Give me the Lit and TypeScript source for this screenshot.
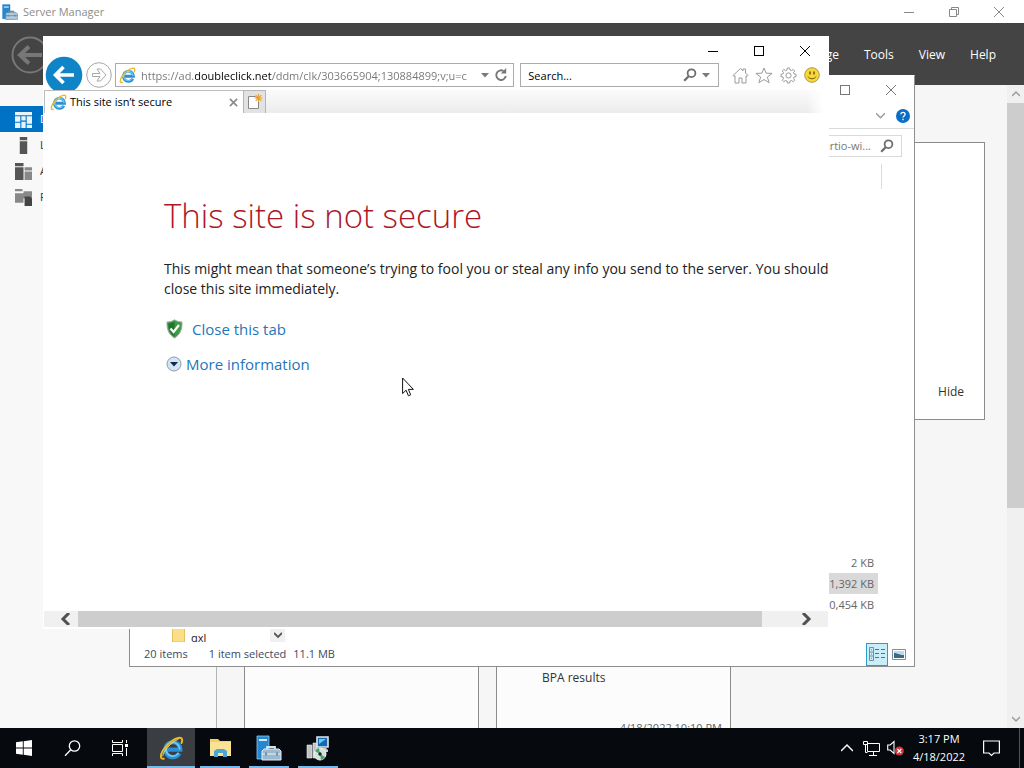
import { LitElement, html, svg, css } from "lit";
import { customElement } from "lit/decorators.js";
import { classMap } from "lit/directives/class-map.js";

const shared = css`
  * {
    box-sizing: border-box;
  }
  button,
  input {
    font: inherit;
    color: inherit;
    margin: 0;
    padding: 0;
    border: 0;
    background: none;
    outline: none;
  }
  button {
    display: flex;
    align-items: center;
    justify-content: center;
    flex: none;
    white-space: nowrap;
  }
  svg {
    display: block;
    flex: none;
  }
`;

/* ---------- icons ---------- */

const ieLogo = (size: number) => html`<svg width=${size} height=${size} viewBox="0 0 24 24" fill="none" aria-hidden="true">
  <path d="M19.600 16.600a7.200 7.200 0 1 1 .9-3.500H8" stroke="#2a8fd6" stroke-width="4" />
  <path d="M18.800 16.200a6.600 6.600 0 1 1 1-3.100" stroke="#6ccbf4" stroke-width="1.700" />
  <path d="M4.600 21.800C1.200 22.600.8 19 3.600 14.200 7 8.400 14.500 2.200 19.600 1.700c3-.2 3.200 2.300 2 5" stroke="#e9b927" stroke-width="1.900" stroke-linecap="round" />
  <path d="M3.600 19.500c.2-2.500 2-5.600 4.600-8.500 3.300-3.700 7.400-6.900 10.600-8" stroke="#fbe27a" stroke-width=".8" />
</svg>`;

const minimize = svg`<path d="M0 5.500h10" />`;
const maximize = svg`<rect x=".5" y=".5" width="9" height="9" />`;
const restore = svg`<path d="M2.500 2.500v-2h7v7h-2M.5 2.500h7v7h-7z" />`;
const cross = svg`<path d="M0 0l10 10M10 0L0 10" />`;
const caption = (shape: unknown, size = 10) =>
  html`<svg width=${size} height=${size} viewBox="0 0 10 10" fill="none" stroke="currentColor" overflow="visible" aria-hidden="true">${shape}</svg>`;

const chevron = (path: string, w = 8, h = 8, sw = 1.5) =>
  html`<svg width=${w} height=${h} viewBox="0 0 8 8" fill="none" stroke="currentColor" stroke-width=${sw} aria-hidden="true"><path d=${path} /></svg>`;
const UP = "M0 6l4-4 4 4";
const DOWN = "M0 2l4 4 4-4";

const lens = html`<svg width="14" height="14" viewBox="0 0 14 14" fill="none" stroke="#6e6e6e" aria-hidden="true">
  <circle cx="8.500" cy="5.200" r="3.900" stroke-width="1.800" />
  <path d="M5.700 8.200L1.200 12.800" stroke-width="2.300" />
</svg>`;

const serverLogo = (size: number, muted: boolean) => html`<svg width=${size} height=${size} viewBox="0 0 26 26" aria-hidden="true">
  <path d="M1 1h12v23H1z" fill="#2487cf" stroke=${muted ? "#2487cf" : "#8ecbf2"} stroke-width=".8" />
  <path d="M3 5h8" stroke="#fff" stroke-width="1.600" />
  <path d="M11 14.500v-2.500h8v2.500" fill="none" stroke=${muted ? "#68869c" : "#d5e4ef"} stroke-width="1.800" />
  <path d="M6 16l2-2h15l2 2v9H6z" fill=${muted ? "#b4cbdc" : "#9bb9d0"} stroke=${muted ? "#55809f" : "#e2edf5"} />
  <path d="M6 19h19" stroke=${muted ? "#55809f" : "#dce9f2"} stroke-width="1.200" />
  <path d="M10 17.500v3M21 17.500v3" stroke="#5b7d98" stroke-width="1.500" />
</svg>`;

/* ---------- server manager ---------- */

@customElement("server-manager")
class ServerManager extends LitElement {
  static styles = [
    shared,
    css`
      :host {
        display: flex;
        flex-direction: column;
        height: 100%;
        background: #f6f6f6;
        overflow: hidden;
      }
      .title {
        display: flex;
        align-items: center;
        height: 23px;
        flex: none;
        padding: 0 3px 0 2px;
        background: #fff;
        color: #8c8c8c;
      }
      .name {
        flex: 1;
        margin-left: 5px;
      }
      .title button {
        width: 45px;
        height: 22px;
        color: #888;
      }
      .header {
        display: flex;
        align-items: center;
        justify-content: space-between;
        height: 62px;
        flex: none;
        padding: 1px 28px 0 11px;
        background: #444;
        color: #fff;
        font-size: 12px;
      }
      .menu {
        display: flex;
        gap: 25px;
      }
      .body {
        display: flex;
        flex: 1;
        min-height: 0;
      }
      .side {
        display: flex;
        flex-direction: column;
        width: 217px;
        flex: none;
        padding-top: 21px;
        background: #f8f8f8;
        border-right: 1px solid #b4b4b4;
      }
      .side button {
        justify-content: flex-start;
        height: 26px;
        padding-left: 15px;
        gap: 8px;
        color: #333;
      }
      .side .on {
        background: #0072c6;
        color: #fff;
      }
      .main {
        flex: 1;
        min-width: 0;
        padding: 57px 22px 0 27px;
        overflow: hidden;
      }
      .welcome {
        display: flex;
        align-items: flex-end;
        justify-content: flex-end;
        height: 278px;
        padding: 19px 20px;
        border: 1px solid #8b8b8b;
        background: #fff;
        color: #333;
        font-size: 12px;
      }
      .tiles {
        display: grid;
        grid-template-columns: repeat(2, 235px);
        gap: 17px;
        margin-top: 100px;
      }
      .tile {
        height: 260px;
        padding: 147px 8px 0 45px;
        border: 1px solid #8b8b8b;
        background: #fcfcfc;
        color: #333;
        font-size: 12px;
        line-height: 20px;
      }
      .date {
        margin-top: 30px;
        text-align: right;
        color: #666;
        font-size: 11px;
      }
      .scroll {
        display: flex;
        flex-direction: column;
        align-items: center;
        width: 17px;
        flex: none;
        background: #f0f0f0;
        color: #9a9a9a;
      }
      .scroll button {
        width: 17px;
        height: 18px;
      }
      .thumb {
        width: 17px;
        height: 63%;
        background: #cdcdcd;
        margin-bottom: auto;
      }
    `,
  ];

  nav = [
    { label: "Dashboard", icon: svg`<path fill="#e6f3fb" d="M0 1h16v3H0zM0 5h5v5H0zM0 11h5v5H0zM6 5h4v4H6zM11 5h5v7h-5zM6 10h4v6H6zM11 13h5v3h-5z" />` },
    { label: "Local Server", icon: svg`<path fill="#555" d="M4.500 0h7v3h-7zM4.500 4h7v12h-7z" />` },
    { label: "All Servers", icon: svg`<path fill="#555" d="M0 0h8v3H0zM0 4h8v12H0z" /><path fill="#888" d="M9 4h7v3H9zM9 8h7v8H9z" />` },
    { label: "File and Storage Services", icon: svg`<path fill="#888" d="M0 0h7v2H0zM0 4h8v9H0zM8 2h8v7H8z" /><path fill="#444" d="M9 7h5l2 2v7H9z" />` },
  ];

  render() {
    return html`
      <header class="title">
        ${serverLogo(16, true)}<span class="name">Server Manager</span>
        <button aria-label="Minimize">${caption(minimize)}</button>
        <button aria-label="Restore">${caption(restore)}</button>
        <button aria-label="Close">${caption(cross)}</button>
      </header>
      <div class="header">
        <button aria-label="Back">
          <svg width="38" height="38" viewBox="0 0 38 38" fill="none" stroke="#777">
            <circle cx="19" cy="19" r="17.500" stroke-width="2" />
            <path d="M31 19H10M18 10.500L9 19l9 8.500" stroke-width="4" />
          </svg>
        </button>
        <nav class="menu">
          ${["Manage", "Tools", "View", "Help"].map((m) => html`<button>${m}</button>`)}
        </nav>
      </div>
      <div class="body">
        <nav class="side">
          ${this.nav.map(
            (n, i) => html`<button class=${classMap({ on: i === 0 })}>
              <svg width="17" height="17" viewBox="0 0 16 16" aria-hidden="true">${n.icon}</svg>${n.label}
            </button>`
          )}
        </nav>
        <main class="main">
          <section class="welcome"><button>Hide</button></section>
          <div class="tiles">
            <section class="tile"></section>
            <section class="tile">
              BPA results
              <div class="date">4/18/2022 10:10 PM</div>
            </section>
          </div>
        </main>
        <div class="scroll">
          <button aria-label="Scroll up">${chevron(UP)}</button>
          <div class="thumb"></div>
          <button aria-label="Scroll down">${chevron(DOWN)}</button>
        </div>
      </div>
    `;
  }
}

/* ---------- file explorer ---------- */

@customElement("file-explorer")
class FileExplorer extends LitElement {
  static styles = [
    shared,
    css`
      :host {
        display: flex;
        flex-direction: column;
        background: #fff;
        border: 1px solid #8e8e8e;
        border-top-color: #fff;
        color: #666;
      }
      .title {
        display: flex;
        justify-content: flex-end;
        height: 27px;
        flex: none;
      }
      .title button {
        width: 46px;
        color: #777;
      }
      .ribbon {
        display: flex;
        align-items: center;
        justify-content: flex-end;
        height: 26px;
        flex: none;
        gap: 11px;
        padding-right: 4px;
        border-bottom: 1px solid #dadada;
        color: #999;
      }
      .find {
        display: flex;
        align-items: center;
        align-self: flex-end;
        width: 190px;
        height: 22px;
        margin: 6px 12px 0 0;
        padding-right: 7px;
        gap: 9px;
        border: 1px solid #d9d9d9;
      }
      .find input {
        flex: 1;
        min-width: 0;
        text-align: right;
        color: #777;
      }
      .rule {
        align-self: flex-end;
        width: 1px;
        height: 25px;
        margin: 7px 32px 0 0;
        background: #dcdcdc;
      }
      .files {
        display: flex;
        flex: 1;
        min-height: 0;
      }
      .tree {
        display: flex;
        align-items: flex-end;
        width: 155px;
        overflow: hidden;
        padding-left: 42px;
      }
      .folder {
        display: flex;
        flex: 1;
        gap: 6px;
        height: 16px;
        color: #222;
        line-height: 24px;
      }
      .folder svg {
        margin-top: 2px;
      }
      .tree > button {
        width: 15px;
        height: 15px;
        background: #f0f0f0;
        color: #555;
      }
      table {
        align-self: flex-end;
        margin: 0 36px 27px auto;
        border-collapse: collapse;
      }
      td {
        width: 160px;
        height: 21px;
        padding: 0 4px;
        text-align: right;
      }
      .sel {
        background: #d9d9d9;
      }
      .status {
        display: flex;
        align-items: center;
        height: 24px;
        flex: none;
        padding: 0 4px 0 14px;
        color: #3a4a63;
      }
      .count {
        margin-right: 21px;
      }
      .size {
        margin-left: 7px;
        flex: 1;
      }
      .view {
        width: 22px;
        height: 23px;
      }
      .view.on {
        border: 1px solid #2c9cc9;
        background: #c9edf9;
      }
    `,
  ];

  render() {
    return html`
      <header class="title">
        <button aria-label="Maximize">${caption(maximize)}</button>
        <button aria-label="Close">${caption(cross)}</button>
      </header>
      <div class="ribbon">
        <button aria-label="Expand the ribbon">${chevron(DOWN, 9, 9, 1.2)}</button>
        <button aria-label="Help">
          <svg width="14" height="14" viewBox="0 0 14 14">
            <circle cx="7" cy="7" r="7" fill="#0a6fc4" />
            <path d="M4.900 5.300c0-2.600 4.200-2.600 4.200 0 0 1.600-2.100 1.600-2.100 3.200M7 9.800v1.400" fill="none" stroke="#fff" stroke-width="1.300" />
          </svg>
        </button>
      </div>
      <div class="find"><input aria-label="Search folder" value="Search virtio-wi..." />${lens}</div>
      <div class="rule"></div>
      <div class="files">
        <div class="tree">
          <div class="folder">
            <svg width="13" height="14" viewBox="0 0 13 14"><path d="M.5.5h12V14H.5z" fill="#fbdf88" stroke="#e5c25c" /></svg>
            qxl
          </div>
          <button aria-label="Scroll down">${chevron(DOWN, 8, 8, 1.8)}</button>
        </div>
        <table>
          <tr><td>2 KB</td></tr>
          <tr class="sel"><td>11,392 KB</td></tr>
          <tr><td>10,454 KB</td></tr>
        </table>
      </div>
      <footer class="status">
        <span class="count">20 items</span><span>1 item selected</span><span class="size">11.1 MB</span>
        <button class="view on" aria-label="Details">
          <svg width="17" height="14" viewBox="0 0 17 14" fill="none">
            <path d="M.5.5h4v13h-4zM.5 5h4M.5 9h4M2 2.700h1M2 7h1M2 11.300h1" stroke="#7a8c98" />
            <path d="M6 2.500h4M12 2.500h4M6 6.500h4M12 6.500h4M6 10.500h4M12 10.500h4" stroke="#5c7079" stroke-width="1" />
          </svg>
        </button>
        <button class="view" aria-label="Large icons">
          <svg width="14" height="11" viewBox="0 0 14 11">
            <path d="M.5.5h13v10H.5z" fill="#fff" stroke="#7b8fa0" />
            <path d="M2 2h10v7H2z" fill="#b9dcf3" />
            <path d="M2 4c3 0 5 2 10 2v3H2z" fill="#3d6a80" />
          </svg>
        </button>
      </footer>
    `;
  }
}

/* ---------- browser window ---------- */

@customElement("browser-window")
class BrowserWindow extends LitElement {
  static styles = [
    shared,
    css`
      :host {
        display: flex;
        flex-direction: column;
        background: #fff;
        color: #000;
        overflow: hidden;
      }
      .title {
        display: flex;
        justify-content: flex-end;
        height: 27px;
        flex: none;
        padding: 3px 1px 0 0;
      }
      .title button {
        width: 46px;
      }
      .bar {
        display: flex;
        align-items: center;
        height: 24px;
        flex: none;
        padding: 0 5px 0 2px;
        gap: 3px;
      }
      .back {
        margin: -7px 0;
      }
      .box {
        display: flex;
        align-items: center;
        flex: 15;
        min-width: 0;
        height: 24px;
        padding: 0 5px 0 3px;
        gap: 5px;
        border: 1px solid #ababab;
        color: #777;
      }
      .box input {
        flex: 1;
        min-width: 0;
        height: 20px;
      }
      .url {
        color: transparent;
        background: linear-gradient(90deg, #757575 54px, #000 54px, #000 131px, #757575 131px);
        background-clip: text;
        -webkit-background-clip: text;
      }
      .search {
        flex: 7;
        margin-left: 3px;
        padding: 0 8px 0 7px;
        color: #000;
      }
      .tools {
        display: flex;
        margin-left: 6px;
      }
      .tools button {
        width: 24px;
        height: 24px;
      }
      .tabs {
        display: flex;
        height: 23px;
        flex: none;
        margin-top: 3px;
        padding: 0 6px 0 1px;
        background: #fff;
      }
      .tab {
        display: flex;
        align-items: center;
        width: 199px;
        gap: 3px;
        padding: 0 5px;
        border: 1px solid #bdbdbd;
        border-width: 1px 0 0 1px;
      }
      .tab span {
        flex: 1;
      }
      .new {
        width: 23px;
        border: 1px solid #b5b5b5;
        border-bottom: 0;
        background: #e2e2e2;
      }
      .fill {
        flex: 1;
        background: linear-gradient(90deg, transparent calc(100% - 16px), #fff), linear-gradient(#fbfbfb, #ececec);
      }
      .page {
        flex: 1;
        min-height: 0;
        overflow: hidden;
        padding: 83px 0 0 121px;
        color: #222;
      }
      h1 {
        margin: 0;
        font-size: 33px;
        line-height: 40px;
        font-weight: 300;
        color: #ae1626;
        white-space: nowrap;
      }
      p {
        margin: 23px 0 20px;
        font-size: 14px;
        line-height: 20px;
        white-space: nowrap;
      }
      .link {
        display: flex;
        align-items: center;
        height: 20px;
        margin-bottom: 15px;
        padding-left: 2px;
        gap: 9px;
        font-size: 15px;
      }
      .link.more {
        gap: 4px;
      }
      a {
        color: #1f76bb;
        text-decoration: none;
      }
      .scroll {
        display: flex;
        height: 16px;
        flex: none;
        margin: 0 1px 2px;
        background: #f0f0f0;
        color: #505050;
      }
      .scroll button {
        width: 44px;
      }
      .scroll .left {
        width: 34px;
        padding-left: 9px;
      }
      .track {
        flex: 1;
        padding-right: 22px;
      }
      .thumb {
        height: 100%;
        background: #cdcdcd;
      }
    `,
  ];

  render() {
    const drop = html`<svg width="8" height="5" viewBox="0 0 8 5" aria-hidden="true"><path d="M0 0h8L4 4.500z" fill="#7a7a7a" /></svg>`;
    return html`
      <header class="title">
        <button aria-label="Minimize">${caption(minimize)}</button>
        <button aria-label="Maximize">${caption(maximize)}</button>
        <button aria-label="Close">${caption(cross)}</button>
      </header>
      <div class="bar">
        <button class="back" aria-label="Back">
          <svg width="38" height="38" viewBox="0 0 38 38">
            <circle cx="19" cy="19" r="18.300" fill="#0f84c7" />
            <path d="M29 19H11M18.500 11L10.500 19l8 8" fill="none" stroke="#fff" stroke-width="3.600" />
          </svg>
        </button>
        <button aria-label="Forward">
          <svg width="26" height="26" viewBox="0 0 26 26" fill="none" stroke="#a8a8a8">
            <circle cx="13" cy="13" r="12.300" fill="#fdfdfd" />
            <path d="M6.500 11.500h7.500l-3-4.500h3.500l5.500 6-5.500 6H11l3-4.500H6.500z" />
          </svg>
        </button>
        <div class="box">
          ${ieLogo(17)}
          <input class="url" aria-label="Address" value="https://ad.doubleclick.net/ddm/clk/303665904;130884899;v;u=c" />
          <button aria-label="Show address history">${drop}</button>
          <button aria-label="Refresh">
            <svg width="14" height="14" viewBox="0 0 14 14">
              <path d="M11.800 8a4.800 4.800 0 1 1-2.300-5" fill="none" stroke="#777" stroke-width="1.900" />
              <path d="M12.200 0v5.500H6.800z" fill="#777" />
            </svg>
          </button>
        </div>
        <div class="box search">
          <input aria-label="Search" value="Search..." />
          <button aria-label="Run search">${lens}</button>
          <button aria-label="Search options">${drop}</button>
        </div>
        <div class="tools">
          <button aria-label="Home">
            <svg width="17" height="17" viewBox="0 0 17 17" fill="none" stroke="#9a9a9a"><path d="M1 8.500l7.500-7 2.500 2.300V2h2.500v4L16 8.500l-1 1-1-.8V16h-4v-5H7v5H3V8.700l-1 .8z" /></svg>
          </button>
          <button aria-label="Favorites">
            <svg width="18" height="17" viewBox="0 0 18 17" fill="none" stroke="#9a9a9a"><path d="M9 1l2.100 5.200 6 .2-4.700 3.600 1.700 5.700L9 12.500l-5.100 3.200L5.600 10 .9 6.400l6-.2z" /></svg>
          </button>
          <button aria-label="Tools">
            <svg width="17" height="17" viewBox="0 0 17 17" fill="none" stroke="#9a9a9a">
              <circle cx="8.500" cy="8.500" r="2.600" />
              <path d="M7 3l.3-2h2.400L10 3l1.500.6 1.700-1.200 1.500 1.500-1.200 1.700L14 7l2 .3v2.400L14 10l-.5 1.500 1.200 1.700-1.500 1.500-1.700-1.200L10 14l-.3 2H7.300L7 14l-1.500-.5-1.700 1.200-1.500-1.500 1.200-1.700L3 10l-2-.3V7.300L3 7l.5-1.400-1.200-1.700 1.500-1.500 1.700 1.200z" />
            </svg>
          </button>
          <button aria-label="Feedback">
            <svg width="16" height="16" viewBox="0 0 16 16">
              <circle cx="8" cy="8" r="7.300" fill="#f9d835" stroke="#a79a5a" />
              <path d="M6 4.500v3M10 4.500v3" stroke="#6b5510" stroke-width="1.500" />
              <path d="M4 9.500c1.500 3 6.500 3 8 0" fill="none" stroke="#6b5510" />
            </svg>
          </button>
        </div>
      </div>
      <div class="tabs">
        <div class="tab">
          ${ieLogo(17)}<span>This site isn’t secure</span>
          <button aria-label="Close tab"><svg width="9" height="9" viewBox="0 0 10 10" stroke="#8a8a8a" stroke-width="1.800"><path d="M1 1l8 8M9 1L1 9" /></svg></button>
        </div>
        <button class="new" aria-label="New tab">
          <svg width="16" height="16" viewBox="0 0 16 16">
            <path d="M1.500 2.500h7l3 3v9h-10z" fill="#fff" stroke="#888" />
            <path d="M11.500 0v8M7.500 4h8M8.700 1.200l5.600 5.600M14.300 1.200L8.700 6.800" stroke="#f0a030" stroke-width="1.200" />
          </svg>
        </button>
        <div class="fill"></div>
      </div>
      <main class="page">
        <h1>This site is not secure</h1>
        <p>
          This might mean that someone’s trying to fool you or steal any info you send to the server. You should<br />close this site
          immediately.
        </p>
        <div class="link">
          <svg width="17" height="20" viewBox="0 0 17 20">
            <path d="M8.500.8c2.500 1.700 5 2.200 7.500 2.200.3 7-1.500 12.500-7.500 16C2.500 15.500.7 10 1 3c2.500 0 5-.5 7.500-2.200z" fill="#3f9a45" stroke="#a5aca5" />
            <path d="M8.500 2.500v15C4 14.500 2.300 10 2.400 4.300c2.200 0 4-.6 6.100-1.800z" fill="#23752e" />
            <path d="M4.500 9.500l3 3.500L13 6" fill="none" stroke="#fff" stroke-width="2.200" />
          </svg>
          <a href="#close">Close this tab</a>
        </div>
        <div class="link more">
          <svg width="16" height="16" viewBox="0 0 16 16">
            <circle cx="8" cy="8" r="7" fill="#d5e4f2" stroke="#8b9bb0" />
            <path d="M4 6h8L8 10.500z" fill="#12294f" />
          </svg>
          <a href="#more">More information</a>
        </div>
      </main>
      <div class="scroll">
        <button class="left" aria-label="Scroll left">${chevron("M6 0L2 4l4 4", 12, 12, 2)}</button>
        <div class="track"><div class="thumb"></div></div>
        <button aria-label="Scroll right">${chevron("M2 0l4 4-4 4", 12, 12, 2)}</button>
      </div>
    `;
  }
}

/* ---------- taskbar ---------- */

@customElement("task-bar")
class TaskBar extends LitElement {
  static styles = [
    shared,
    css`
      :host {
        display: flex;
        height: 40px;
        background: #06090e;
        color: #fff;
        font-size: 11px;
      }
      .sys {
        width: 48px;
      }
      .apps {
        display: flex;
        flex: 1;
        gap: 1px;
        margin-left: 3px;
      }
      .app {
        width: 48px;
        background: linear-gradient(#76b9ed, #76b9ed) bottom / 40px 2px no-repeat;
      }
      .app.on {
        background: linear-gradient(#76b9ed, #76b9ed) bottom / 48px 2px no-repeat #3a3d41;
      }
      .tray {
        width: 24px;
      }
      .clock {
        flex-direction: column;
        width: 64px;
        line-height: 18px;
      }
      .note {
        width: 40px;
      }
      .peek {
        width: 5px;
        margin-left: 8px;
        border-left: 1px solid #50545a;
      }
    `,
  ];

  apps = [
    { name: "Internet Explorer", icon: ieLogo(25) },
    {
      name: "File Explorer",
      icon: html`<svg width="23" height="20" viewBox="0 0 23 20">
        <path d="M1 1h8l2 2h11v15H1z" fill="#f4cf67" /><path d="M1 4h21v14H1z" fill="#fbe192" />
        <path d="M5 19v-6l3-2h7l3 2v6h-4v-4H9v4z" fill="#4aa6d6" />
      </svg>`,
    },
    { name: "Server Manager", icon: serverLogo(26, false) },
    {
      name: "Installer",
      icon: html`<svg width="24" height="25" viewBox="0 0 24 25">
        <path d="M1 9h5v13H1zM7 7h4v15H7z" fill="#bfc3c6" stroke="#eee" stroke-width=".6" />
        <path d="M11 1h11v10H11z" fill="#1767b0" stroke="#dfe8ee" stroke-width="1.600" />
        <path d="M13 3h7L13 8z" fill="#5fd0f5" />
        <path d="M14 12h6l2 2v2h-8z" fill="#c8ccd0" />
        <circle cx="14" cy="18" r="6" fill="#cfe3d8" stroke="#f4f4f4" />
        <path d="M14 18l-5-3a6 6 0 0 1 4-3zM14 18l5 3a6 6 0 0 1-4 3z" fill="#4ba36a" />
        <circle cx="14" cy="18" r="1.700" fill="#222" />
      </svg>`,
    },
  ];

  render() {
    return html`
      <button class="sys" aria-label="Start">
        <svg width="16" height="16" viewBox="0 0 16 16" fill="#fff"><path d="M0 2.300L6.800 1.300v6.200H0zM7.700 1.200L16 0v7.500H7.700zM0 8.400h6.800v6.300L0 13.700zM7.700 8.400H16V16l-8.300-1.200z" /></svg>
      </button>
      <button class="sys" aria-label="Search">
        <svg width="17" height="17" viewBox="0 0 17 17" fill="none" stroke="#fff" stroke-width="1.300"><circle cx="10.500" cy="6" r="5.200" /><path d="M6.800 9.800L1 15.800" /></svg>
      </button>
      <button class="sys" aria-label="Task view">
        <svg width="16" height="16" viewBox="0 0 16 16" fill="none" stroke="#fff"><path d="M.5 0v2.500h10V0M.5 4.500h10v7H.5zM.5 16v-2.500h10V16M14.500 0v3M14.500 8v8" /><path d="M13 4h3v3h-3z" fill="#fff" stroke="none" /></svg>
      </button>
      <div class="apps">
        ${this.apps.map((a, i) => html`<button class=${classMap({ app: true, on: i === 0 })} aria-label=${a.name}>${a.icon}</button>`)}
      </div>
      <button class="tray" aria-label="Show hidden icons">${chevron(UP, 12, 12, 1)}</button>
      <button class="tray" aria-label="Network">
        <svg width="17" height="15" viewBox="0 0 17 15" fill="none" stroke="#fff"><path d="M4.500 2.500h12v8h-12zM10.500 10.500v4M6 14.500h8M.5.500h4v3h-4zM2.500 3.500v8h2" /></svg>
      </button>
      <button class="tray" aria-label="Volume muted">
        <svg width="17" height="16" viewBox="0 0 17 16" fill="none"><path d="M.7 5h2.500L7 1.500v12L3.200 10H.7z" stroke="#fff" stroke-width="1.100" /><circle cx="12.300" cy="11" r="4.500" fill="#d0343c" /><path d="M10.300 9l4 4M14.300 9l-4 4" stroke="#fff" stroke-width="1.200" /></svg>
      </button>
      <button class="clock"><span>3:17 PM</span><span>4/18/2022</span></button>
      <button class="note" aria-label="Notifications">
        <svg width="17" height="17" viewBox="0 0 17 17" fill="none" stroke="#fff" stroke-width="1.200"><path d="M.6 1h15.800v12H11l-2.500 2.500L6 13H.6z" /></svg>
      </button>
      <button class="peek" aria-label="Show desktop"></button>
    `;
  }
}

/* ---------- desktop ---------- */

@customElement("app-root")
class AppRoot extends LitElement {
  static styles = [
    shared,
    css`
      :host {
        display: flex;
        flex-direction: column;
        height: 100vh;
        font-family: "Open Sans", "Noto Sans", sans-serif;
        font-size: 11px;
        line-height: 16px;
      }
      .desk {
        position: relative;
        flex: 1;
        min-height: 0;
        overflow: hidden;
      }
      .files,
      .web,
      .pointer {
        position: absolute;
      }
      .files {
        left: 129px;
        top: 75px;
        width: 786px;
        height: 592px;
      }
      .web {
        left: 43px;
        top: 36px;
        width: 786px;
        height: 593px;
      }
      .pointer {
        left: 402px;
        top: 377px;
      }
    `,
  ];

  render() {
    return html`
      <div class="desk">
        <server-manager></server-manager>
        <file-explorer class="files"></file-explorer>
        <browser-window class="web"></browser-window>
        <svg class="pointer" width="12" height="20" viewBox="0 0 12 20" aria-hidden="true">
          <path d="M.6 1v15.500l3.500-3.300 2.300 5.600 2.300-1-2.300-5.400h5z" fill="#fff" stroke="#111" />
        </svg>
      </div>
      <task-bar></task-bar>
    `;
  }
}
